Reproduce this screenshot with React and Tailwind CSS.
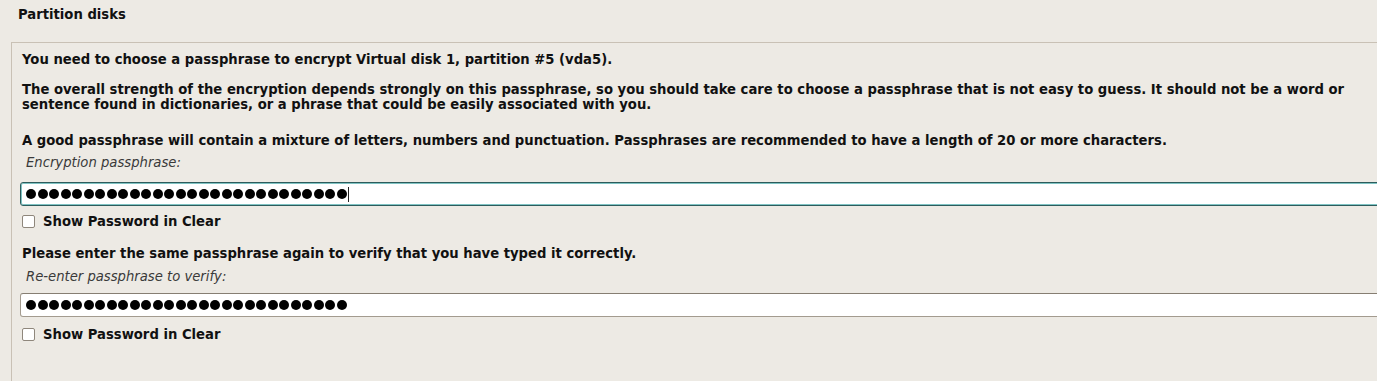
const dots = Array.from({ length: 28 });

function Secret({ focused }) {
  return (
    <div
      className={
        focused
          ? "h-[24px] rounded-[3px] border border-[#2d5c5c] bg-white shadow-[inset_0_0_0_1px_#7fc3c3] flex items-center pl-[5px]"
          : "h-[24px] rounded-[3px] border border-[#a39b8f] border-t-[#867e72] bg-white flex items-center pl-[5px]"
      }
    >
      <div className="flex items-center gap-[1.5px]">
        {dots.map((_, i) => (
          <span key={i} className="block w-[10px] h-[10px] rounded-full bg-black" />
        ))}
      </div>
      {focused && <span className="block w-[1px] h-[15px] bg-[#222] ml-[1px]" />}
    </div>
  );
}

function ShowClear() {
  return (
    <label className="flex items-center gap-[8px] pl-[2px] h-[15px]">
      <span className="block w-[13px] h-[13px] rounded-[2px] border border-[#8f877c] bg-white" />
      <span className="font-bold">Show Password in Clear</span>
    </label>
  );
}

export default function App() {
  return (
    <div
      className="w-[1377px] h-[381px] overflow-hidden bg-[#edeae4] text-[13.2px] leading-[15px] text-[#111]"
      style={{ fontFamily: '"DejaVu Sans", sans-serif' }}
    >
      <h1 className="pt-[7px] pl-[18px] font-bold">Partition disks</h1>

      <div className="mt-[20px] ml-[11px] w-[1400px] h-[400px] border-l border-t border-[#c9c1b5] pt-[9px] pl-[8px]">
        <p className="pl-[2px] font-bold">
          You need to choose a passphrase to encrypt Virtual disk 1, partition #5 (vda5).
        </p>

        <p className="mt-[15px] pl-[2px] font-bold">
          The overall strength of the encryption depends strongly on this passphrase, so you should take care to choose a passphrase that is not easy to guess. It should not be a word or
          <br />
          sentence found in dictionaries, or a phrase that could be easily associated with you.
        </p>

        <p className="mt-[21px] pl-[2px] font-bold">
          A good passphrase will contain a mixture of letters, numbers and punctuation. Passphrases are recommended to have a length of 20 or more characters.
        </p>
        <p className="mt-[7px] pl-[6px] italic text-[#3a3a3a]">Encryption passphrase:</p>

        <div className="mt-[12px]">
          <Secret focused />
        </div>
        <div className="mt-[8px]">
          <ShowClear />
        </div>

        <p className="mt-[17px] pl-[2px] font-bold">
          Please enter the same passphrase again to verify that you have typed it correctly.
        </p>
        <p className="mt-[8px] pl-[6px] italic text-[#3a3a3a]">Re-enter passphrase to verify:</p>

        <div className="mt-[9px]">
          <Secret />
        </div>
        <div className="mt-[10px]">
          <ShowClear />
        </div>
      </div>
    </div>
  );
}
